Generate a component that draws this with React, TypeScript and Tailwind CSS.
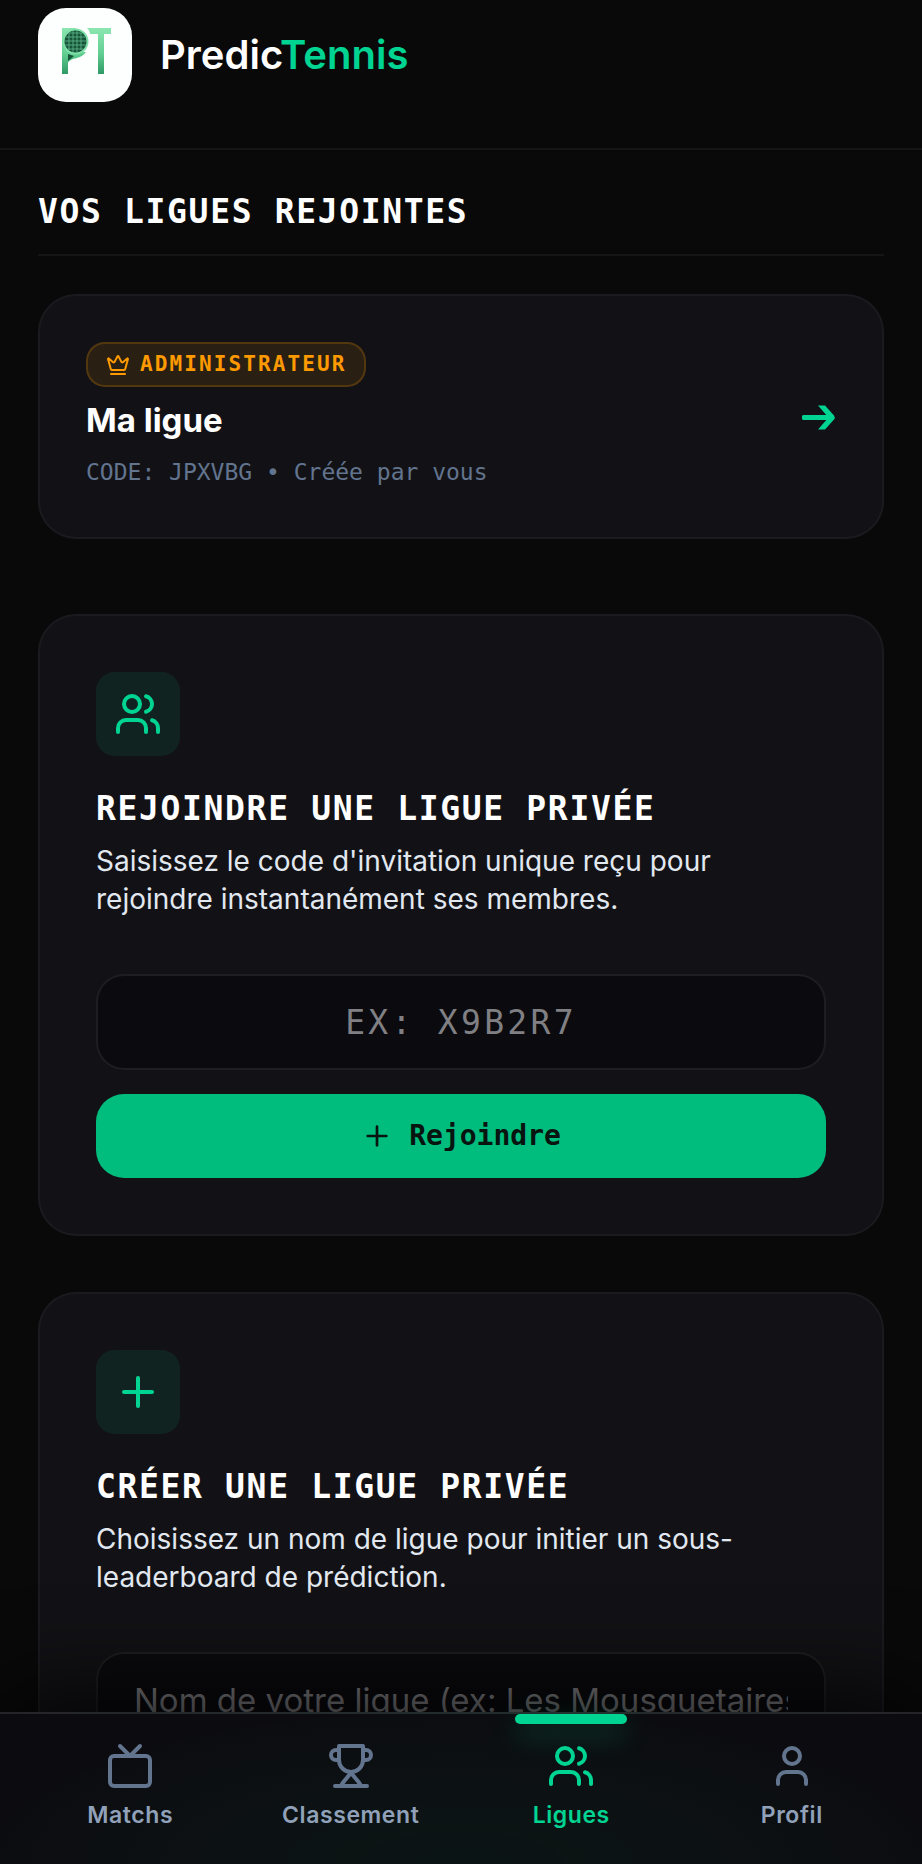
import { useState, type ReactNode } from 'react';
import { Crown, Plus, User, Users } from 'lucide-react';

const MONO = "font-['DejaVu_Sans_Mono','Liberation_Mono',monospace]";

function Logo() {
  return (
    <svg viewBox="0 0 94 94" className="size-[94px] shrink-0" aria-hidden="true">
      <defs>
        <linearGradient id="mark" gradientUnits="userSpaceOnUse" x1="0" y1="20" x2="0" y2="66">
          <stop offset="0" stopColor="#8ce6b0" />
          <stop offset="0.55" stopColor="#62cf92" />
          <stop offset="1" stopColor="#2f9a66" />
        </linearGradient>
      </defs>
      <rect width="94" height="94" rx="28" fill="#fcfffe" />
      <path d="M24 20h14v6h-8v40h-6z" fill="url(#mark)" />
      <path d="M29 44v14c1-6 5-7 10-8 4-1 7-3 9-6z" fill="url(#mark)" />
      <path d="M49 20h24v6h-7v40h-6V26h-8c0-2-1-4-3-6z" fill="url(#mark)" />
      <circle cx="37.500" cy="33.500" r="12" fill="#17553b" stroke="#7ee0a8" strokeWidth="2" />
      <path
        d="M31 25v17M35 22.500v22M39 22.500v22M43 25v17M28 29h19M26.500 33h22M27 37h21M30 41h15M31 25h13"
        stroke="#5fb98a"
        strokeWidth="0.8"
      />
      <path d="M30 46l6 2-6 5z" fill="#17553b" />
    </svg>
  );
}

function TvIcon({ className }: { className?: string }) {
  return (
    <svg viewBox="0 0 24 24" fill="none" stroke="currentColor" strokeWidth="2" strokeLinecap="round" strokeLinejoin="round" className={className} aria-hidden="true">
      <rect x="2" y="7" width="20" height="15" rx="2" />
      <path d="m17 2-5 5-5-5" />
    </svg>
  );
}

function TrophyIcon({ className }: { className?: string }) {
  return (
    <svg viewBox="0 0 24 24" fill="none" stroke="currentColor" strokeWidth="2" strokeLinecap="round" strokeLinejoin="round" className={className} aria-hidden="true">
      <path d="M6 9H4.500a2.500 2.500 0 0 1 0-5H6" />
      <path d="M18 9h1.500a2.500 2.500 0 0 0 0-5H18" />
      <path d="M4 22h16" />
      <path d="M12 15c-1 2.500-3 3-5 7" />
      <path d="M12 15c1 2.500 3 3 5 7" />
      <path d="M18 2H6v7a6 6 0 0 0 12 0V2Z" />
    </svg>
  );
}

function ArrowIcon() {
  return (
    <svg viewBox="0 0 34 26" className="h-[26px] w-[34px] shrink-0 text-emerald-400" aria-hidden="true">
      <path d="M2 13.500h27" stroke="currentColor" strokeWidth="5" strokeLinecap="round" />
      <path d="M16 1.500h7l9 10q1.500 2 0 4l-9 10h-7l10.500-12z" fill="currentColor" />
    </svg>
  );
}

type ActionCardProps = {
  icon: ReactNode;
  title: string;
  description: string;
  children: ReactNode;
};

function ActionCard({ icon, title, description, children }: ActionCardProps) {
  return (
    <section className="rounded-[38px] border-2 border-white/4 bg-[#121216] p-14">
      <div className="flex size-[84px] items-center justify-center rounded-[19px] bg-emerald-500/10 text-emerald-400">
        {icon}
      </div>
      <h2 className={`mt-7 text-[33px] leading-[50px] font-bold tracking-wider text-white uppercase ${MONO}`}>
        {title}
      </h2>
      <p className="mt-2 text-[28px] leading-[38px] text-slate-200">{description}</p>
      <form className="mt-14 flex flex-col gap-6" onSubmit={(e) => e.preventDefault()}>
        {children}
      </form>
    </section>
  );
}

const tabs = [
  { label: 'Matchs', Icon: TvIcon },
  { label: 'Classement', Icon: TrophyIcon },
  { label: 'Ligues', Icon: Users },
  { label: 'Profil', Icon: User },
];

function BottomNav() {
  const active = 'Ligues';

  return (
    <nav className="relative z-10 border-t-2 border-white/10 bg-[#0c0c10] bg-[radial-gradient(ellipse_at_bottom,rgba(0,188,125,0.05),rgba(0,188,125,0.02)_50%,transparent_75%)] px-5 shadow-[0_-20px_90px_rgba(0,0,0,0.8)]">
      <ul className="grid grid-cols-4">
        {tabs.map(({ label, Icon }) => (
          <li key={label} className="relative">
            {label === active && (
              <span className="absolute top-0 left-1/2 h-[10px] w-28 -translate-x-1/2 rounded-full bg-emerald-400 shadow-[0_10px_28px_rgba(0,212,146,0.3)]" />
            )}
            <a
              href="#"
              aria-current={label === active ? 'page' : undefined}
              className={
                label === active
                  ? 'flex flex-col items-center gap-2 pt-7 pb-8 text-emerald-400'
                  : 'flex flex-col items-center gap-2 pt-7 pb-8 text-slate-500'
              }
            >
              <Icon className="size-12" />
              <span
                className={
                  label === active
                    ? 'text-[23px] leading-[34px] font-semibold tracking-wide'
                    : 'text-[23px] leading-[34px] font-semibold tracking-wide text-slate-400'
                }
              >
                {label}
              </span>
            </a>
          </li>
        ))}
      </ul>
    </nav>
  );
}

export default function App() {
  const [code, setCode] = useState('');
  const [name, setName] = useState('');

  return (
    <div className="flex h-screen flex-col overflow-hidden bg-[#09090a] font-[Inter,sans-serif] text-white">
      <div className="min-h-0 flex-1 overflow-y-auto [scrollbar-width:none]">
        <header className="flex items-start border-b-2 border-white/5 px-[38px] pt-2 pb-[46px]">
          <a href="#" className="flex items-center gap-7">
            <Logo />
            <span className="text-[40px] leading-[48px] font-semibold">
              Predic<span className="text-emerald-400">Tennis</span>
            </span>
          </a>
        </header>

        <main className="px-[38px] pt-[38px] pb-14">
          <h1 className={`border-b-2 border-white/5 pb-[18px] text-[33px] leading-[48px] font-bold tracking-wider uppercase ${MONO}`}>
            Vos ligues rejointes
          </h1>

          <a
            href="#"
            className="mt-[38px] flex items-center justify-between rounded-[38px] border-2 border-white/4 bg-[#121216] p-[46px]"
          >
            <div>
              <span
                className={`inline-flex items-center gap-[10px] rounded-[19px] border-2 border-amber-500/20 bg-amber-500/10 px-[18px] py-1 text-[21px] leading-[33px] font-bold tracking-widest text-amber-500 uppercase ${MONO}`}
              >
                <Crown className="size-6" />
                Administrateur
              </span>
              <h2 className="mt-2 text-[33px] leading-[50px] font-bold">Ma ligue</h2>
              <p className={`mt-2 text-[23px] leading-[38px] text-slate-500 ${MONO}`}>
                CODE: JPXVBG • Créée par vous
              </p>
            </div>
            <ArrowIcon />
          </a>

          <div className="mt-[75px] flex flex-col gap-14">
            <ActionCard
              icon={<Users className="size-12" />}
              title="Rejoindre une ligue privée"
              description="Saisissez le code d'invitation unique reçu pour rejoindre instantanément ses membres."
            >
              <input
                type="text"
                aria-label="Code d'invitation"
                placeholder="EX: X9B2R7"
                value={code}
                onChange={(e) => setCode(e.target.value)}
                className={`h-24 w-full rounded-[28px] border-2 border-white/8 bg-[#0b0b0f] px-9 text-center text-[33px] tracking-widest placeholder:text-[#808084] ${MONO}`}
              />
              <button
                type="submit"
                className={`flex h-[84px] items-center justify-center gap-4 rounded-[28px] bg-emerald-500 text-[28px] font-bold text-[#08140f] ${MONO}`}
              >
                <Plus className="size-8" />
                Rejoindre
              </button>
            </ActionCard>

            <ActionCard
              icon={<Plus className="size-12" />}
              title="Créer une ligue privée"
              description="Choisissez un nom de ligue pour initier un sous-leaderboard de prédiction."
            >
              <input
                type="text"
                aria-label="Nom de la ligue"
                placeholder="Nom de votre ligue (ex: Les Mousquetaires)"
                value={name}
                onChange={(e) => setName(e.target.value)}
                className="h-24 w-full rounded-[28px] border-2 border-white/8 bg-[#0b0b0f] px-9 text-[33px] placeholder:text-[#808084]"
              />
            </ActionCard>
          </div>
        </main>
      </div>

      <BottomNav />
    </div>
  );
}
